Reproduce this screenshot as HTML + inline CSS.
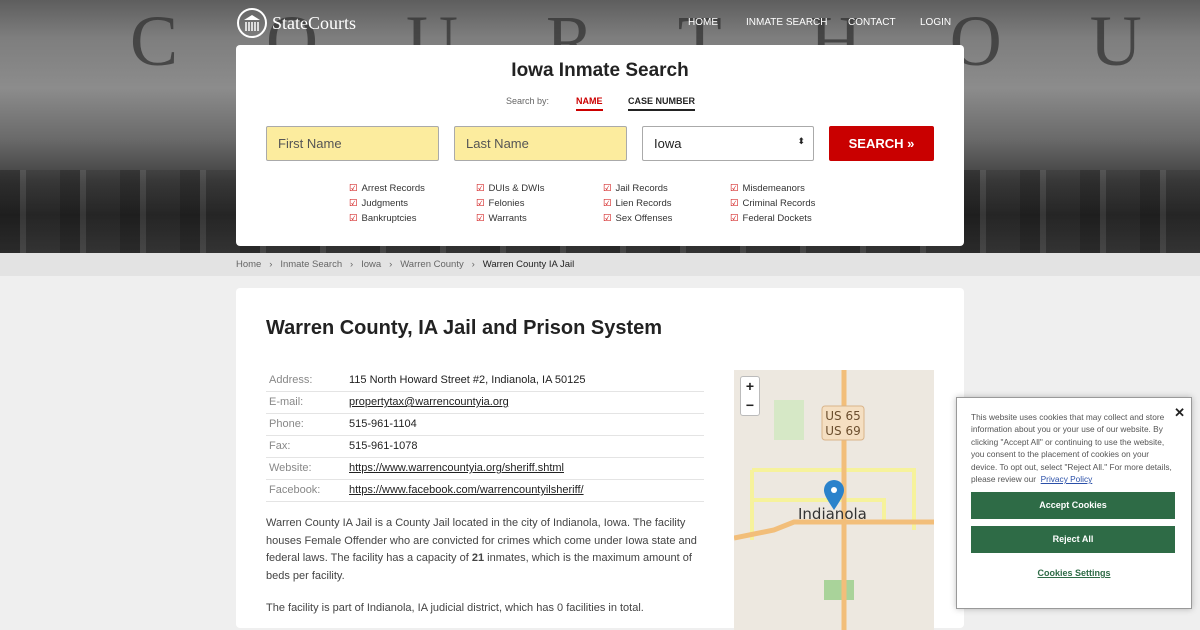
<!DOCTYPE html>
<html><head><meta charset="utf-8"><style>
*{box-sizing:border-box;margin:0;padding:0}
body{width:1200px;height:620px;overflow:hidden;background:#efefef;font-family:"Liberation Sans",sans-serif;color:#222;position:relative}
.hero{position:absolute;left:0;top:0;width:1200px;height:253px;background:linear-gradient(180deg,#5e5e5e 0%,#7e7e7e 15%,#8c8c8c 35%,#6a6a6a 55%,#3e3e3e 72%,#2a2a2a 85%,#3a3a3a 100%);overflow:hidden}
.hero .letters{position:absolute;top:0px;left:130px;font-family:"Liberation Serif",serif;font-size:72px;color:#333;opacity:.75;letter-spacing:88px;white-space:nowrap}
.hero .band{position:absolute;left:0;top:170px;width:1200px;height:83px;background:repeating-linear-gradient(90deg,rgba(0,0,0,.35) 0 20px,rgba(255,255,255,.08) 20px 26px,rgba(0,0,0,.15) 26px 60px);opacity:.8}
.logo{position:absolute;left:236px;top:7px;display:flex;align-items:center;color:#fff;font-family:"Liberation Serif",serif;font-size:18px}
.nav{position:absolute;top:17px;font-size:10px;color:#fff}
.card{position:absolute;left:236px;top:45px;width:728px;height:201px;background:#fff;border-radius:4px}
h1{position:absolute;top:15px;width:100%;text-align:center;font-size:19px;font-weight:bold}
.sb{position:absolute;top:51px;font-size:9px}
.inp{position:absolute;top:81px;height:35px;border:1px solid #aaa;border-radius:2px;font-size:13px;padding:9px 11px;color:#555}
.chk{position:absolute;font-size:9.5px;color:#333;line-height:15px}
.chk span{color:#c00;margin-right:4px}
.bc{position:absolute;top:253px;left:0;width:1200px;height:23px;background:#e3e3e3;font-size:9.5px;color:#666;padding:6px 0 0 236px}
.main{position:absolute;left:236px;top:288px;width:728px;height:340px;background:#fff;border-radius:4px}
h2{position:absolute;left:30px;top:29px;font-size:20px;font-weight:bold}
table{position:absolute;left:30px;top:81px;width:438px;border-collapse:collapse;font-size:11px}
td{height:22px;border-bottom:1px solid #e4e4e4;padding-left:3px}
td.l{color:#888;width:80px}
td a{color:#222;text-decoration:underline}
p{position:absolute;left:30px;width:440px;font-size:11px;line-height:17.6px;color:#444}
.map{position:absolute;left:498px;top:82px;width:200px;height:260px;background:#ede8e0;overflow:hidden}
.ck{position:absolute;left:956px;top:397px;width:236px;height:212px;background:#fff;border:1px solid #999;box-shadow:0 0 6px rgba(0,0,0,.25);font-size:8.3px;color:#555;line-height:12.4px}
.btn{position:absolute;left:14px;width:204px;height:27px;background:#2e6b46;color:#fff;font-size:9px;font-weight:bold;text-align:center;line-height:27px}
</style></head><body>
<div class="hero"><div class="letters">COURTHOUSE</div><div class="band"></div></div>
<div class="logo"><svg width="32" height="32" viewBox="0 0 32 32"><circle cx="16" cy="16" r="14" fill="none" stroke="#fff" stroke-width="2"/><path d="M8 13 L16 8 L24 13 Z" fill="#fff"/><path d="M10 15v9M13 15v9M16 15v9M19 15v9M22 15v9" stroke="#fff" stroke-width="1.5"/></svg><span style="margin-left:4px">StateCourts</span></div>
<div class="nav" style="left:688px">HOME</div><div class="nav" style="left:746px">INMATE SEARCH</div><div class="nav" style="left:848px">CONTACT</div><div class="nav" style="left:920px">LOGIN</div>
<div class="card">
<h1>Iowa Inmate Search</h1>
<div class="sb" style="left:270px;color:#666">Search by:</div>
<div class="sb" style="left:340px;color:#c00;font-weight:bold;border-bottom:2px solid #c00;padding-bottom:3px">NAME</div>
<div class="sb" style="left:392px;font-weight:bold;border-bottom:2px solid #222;padding-bottom:3px">CASE NUMBER</div>
<div class="inp" style="left:30px;width:173px;background:#fcec9e">First Name</div>
<div class="inp" style="left:218px;width:173px;background:#fcec9e">Last Name</div>
<div class="inp" style="left:406px;width:172px;background:#fff;color:#222">Iowa<span style="position:absolute;right:8px;top:9px;font-size:9px">⬍</span></div>
<div class="inp" style="left:593px;width:105px;background:#c90000;border-color:#c90000;color:#fff;font-weight:bold;text-align:center">SEARCH »</div>
<div class="chk" style="left:113px;top:136px"><span>☑</span>Arrest Records<br><span>☑</span>Judgments<br><span>☑</span>Bankruptcies</div>
<div class="chk" style="left:240px;top:136px"><span>☑</span>DUIs &amp; DWIs<br><span>☑</span>Felonies<br><span>☑</span>Warrants</div>
<div class="chk" style="left:367px;top:136px"><span>☑</span>Jail Records<br><span>☑</span>Lien Records<br><span>☑</span>Sex Offenses</div>
<div class="chk" style="left:494px;top:136px"><span>☑</span>Misdemeanors<br><span>☑</span>Criminal Records<br><span>☑</span>Federal Dockets</div>
</div>
<div class="bc">Home &nbsp;&nbsp;›&nbsp;&nbsp; Inmate Search &nbsp;&nbsp;›&nbsp;&nbsp; Iowa &nbsp;&nbsp;›&nbsp;&nbsp; Warren County &nbsp;&nbsp;›&nbsp;&nbsp; <span style="color:#222">Warren County IA Jail</span></div>
<div class="main">
<h2>Warren County, IA Jail and Prison System</h2>
<table>
<tr><td class="l">Address:</td><td>115 North Howard Street #2, Indianola, IA 50125</td></tr>
<tr><td class="l">E-mail:</td><td><a>propertytax@warrencountyia.org</a></td></tr>
<tr><td class="l">Phone:</td><td>515-961-1104</td></tr>
<tr><td class="l">Fax:</td><td>515-961-1078</td></tr>
<tr><td class="l">Website:</td><td><a>https://www.warrencountyia.org/sheriff.shtml</a></td></tr>
<tr><td class="l">Facebook:</td><td><a>https://www.facebook.com/warrencountyilsheriff/</a></td></tr>
</table>
<p style="top:227px">Warren County IA Jail is a County Jail located in the city of Indianola, Iowa. The facility houses Female Offender who are convicted for crimes which come under Iowa state and federal laws. The facility has a capacity of <b>21</b> inmates, which is the maximum amount of beds per facility.</p>
<p style="top:312px">The facility is part of Indianola, IA judicial district, which has 0 facilities in total.</p>
<div class="map">
<svg width="200" height="260" style="position:absolute;left:0;top:0">
<rect x="40" y="30" width="30" height="40" fill="#d6e8c6"/><rect x="90" y="210" width="30" height="20" fill="#a9d39a"/>
<path d="M18 100 H180 V160 M18 100 V170 M18 130 H150 V150" stroke="#f6f29c" stroke-width="4" fill="none"/>
<path d="M110 0 V260" stroke="#f2be7a" stroke-width="5"/>
<path d="M0 168 L40 160 L60 152 H200" stroke="#f2be7a" stroke-width="5" fill="none"/>
<rect x="88" y="36" width="42" height="34" rx="3" fill="#f5dfc2" stroke="#d9b48a"/>
<text x="109" y="50" font-size="12" text-anchor="middle" fill="#6b4e2e" font-family="DejaVu Sans">US 65</text>
<text x="109" y="65" font-size="12" text-anchor="middle" fill="#6b4e2e" font-family="DejaVu Sans">US 69</text>
<text x="64" y="149" font-size="15" fill="#333" font-family="DejaVu Sans">Indianola</text>
<path d="M100 140 C92 128 90 124 90 120 a10 10 0 0 1 20 0 c0 4 -2 8 -10 20z" fill="#2a82cb"/><circle cx="100" cy="120" r="3" fill="#fff"/>
</svg>
<div style="position:absolute;left:6px;top:6px;width:20px;height:40px;background:#fff;border:1px solid #bbb;border-radius:3px;font-size:14px;font-weight:bold;text-align:center;line-height:19px">+<br>−</div>
</div>
</div>
<div class="ck">
<div style="position:absolute;left:14px;top:13px;width:206px">This website uses cookies that may collect and store information about you or your use of our website. By clicking "Accept All" or continuing to use the website, you consent to the placement of cookies on your device. To opt out, select "Reject All." For more details, please review our &nbsp;<u style="color:#2a4fa8">Privacy Policy</u></div>
<div style="position:absolute;right:6px;top:9px;font-size:13px;color:#222;font-weight:bold">✕</div>
<div class="btn" style="top:94px">Accept Cookies</div>
<div class="btn" style="top:128px">Reject All</div>
<div style="position:absolute;left:0;width:100%;top:169px;text-align:center;font-size:9px;font-weight:bold;color:#2e6b46;text-decoration:underline">Cookies Settings</div>
</div>
</body></html>
